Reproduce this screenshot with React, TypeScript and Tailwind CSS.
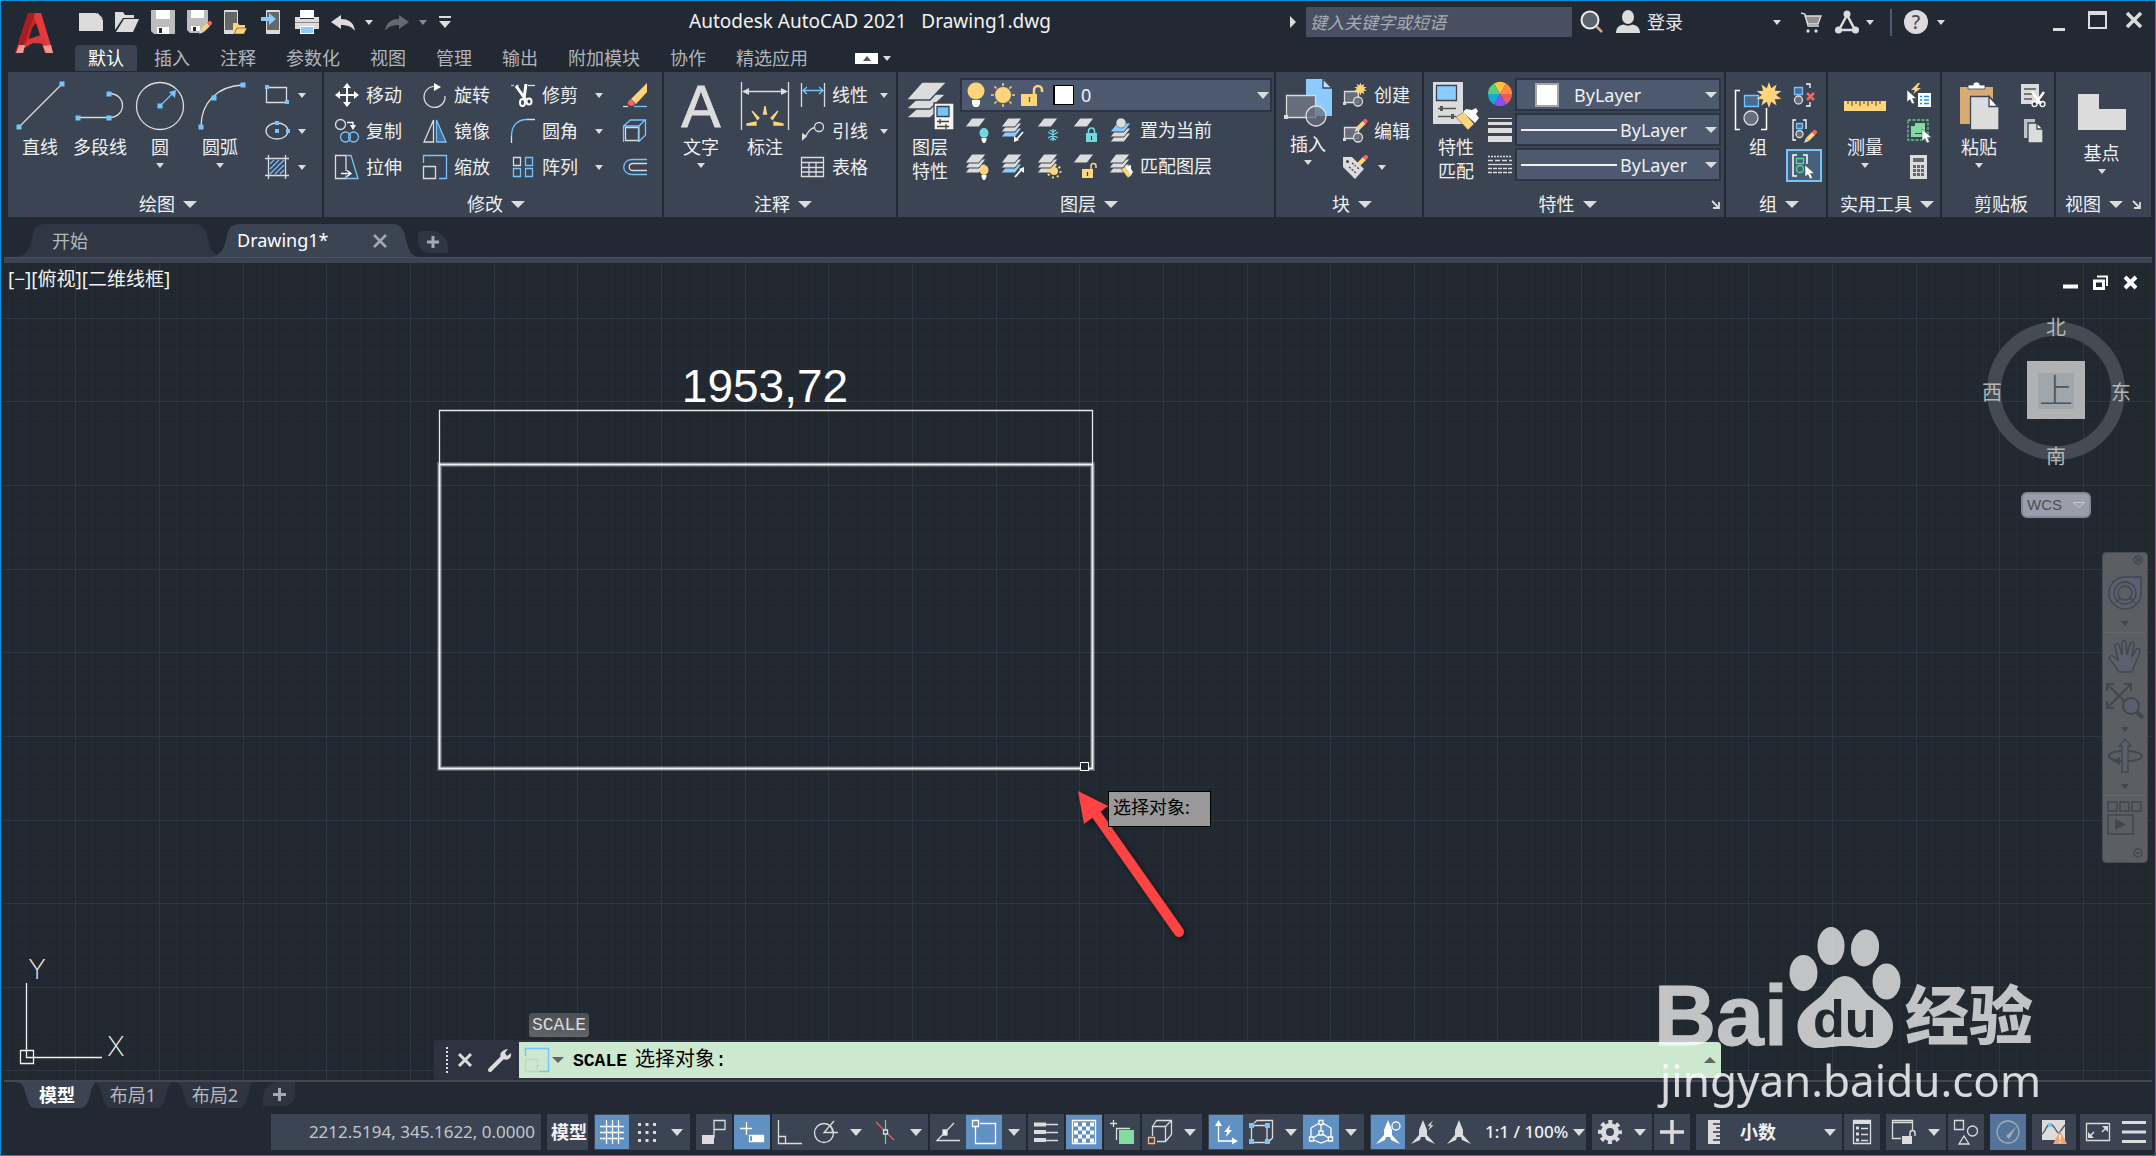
import type { ReactNode } from 'react';

const GREY = '#dcdcdc';
const BLUE = '#74c4ff';
const SKY = '#8accff';
const GOLD = '#ffd47b';
const PANEL = '#3b4453';
const CHROME = '#222933';

interface IconProps {
  w?: number;
  h?: number;
  className?: string;
  children: ReactNode;
}

function Icon({ w = 24, h = 24, className = '', children }: IconProps) {
  return (
    <svg
      width={w}
      height={h}
      viewBox={`0 0 ${w} ${h}`}
      fill="none"
      stroke={GREY}
      strokeWidth={1.3}
      className={`shrink-0 overflow-visible ${className}`}
      aria-hidden="true"
    >
      {children}
    </svg>
  );
}

function Caret({ size = 'sm', up = false, color = GREY }: { size?: 'sm' | 'lg'; up?: boolean; color?: string }) {
  const w = size === 'sm' ? 8 : 14;
  const h = size === 'sm' ? 5 : 7;
  return (
    <svg width={w} height={h} viewBox={`0 0 ${w} ${h}`} className="shrink-0" aria-hidden="true">
      <path d={up ? `M0 ${h}H${w}L${w / 2} 0z` : `M0 0H${w}L${w / 2} ${h}z`} fill={color} />
    </svg>
  );
}

/* small blue grip squares used by the draw tools */
function Grips({ at, s = 5 }: { at: [number, number][]; s?: number }) {
  return (
    <>
      {at.map(([x, y]) => (
        <rect key={`${x}-${y}`} x={x - s / 2} y={y - s / 2} width={s} height={s} fill={BLUE} stroke="none" />
      ))}
    </>
  );
}

function Pencil({ x, y }: { x: number; y: number }) {
  return (
    <g transform={`translate(${x} ${y})`} stroke="none">
      <path d="M0 13l2-5 3 3z" fill={GREY} />
      <path d="M2 8l6-6 3 3-6 6z" fill={GOLD} />
      <path d="M8 2l1.5-1.5a1.5 1.5 0 0 1 2.5 0l.5.5a1.5 1.5 0 0 1 0 2.5L11 5z" fill="#ff5f63" />
    </g>
  );
}

function Cursor({ x, y }: { x: number; y: number }) {
  return <path transform={`translate(${x} ${y})`} d="M0 0v12l3-2.5 2 4.5 2.5-1-2-4.5h4z" fill="#fff" stroke={PANEL} strokeWidth={0.5} />;
}

function Star({ x, y, r }: { x: number; y: number; r: number }) {
  const pts = Array.from({ length: 20 }, (_, i) => {
    const rad = i % 2 ? r * 0.55 : r;
    const a = (i * Math.PI) / 10 - Math.PI / 2;
    return `${(x + rad * Math.cos(a)).toFixed(1)},${(y + rad * Math.sin(a)).toFixed(1)}`;
  });
  return <polygon points={pts.join(' ')} fill={GOLD} stroke="none" />;
}

function Bulb({ x, y, color = GOLD }: { x: number; y: number; color?: string }) {
  return (
    <g stroke="none">
      <ellipse cx={x} cy={y} rx={4.5} ry={5} fill={color} />
      <path d={`M${x - 2.5} ${y + 5}h5v2l-1.5 3h-2l-1.5-3z`} fill="#fff" />
    </g>
  );
}

function Sheets({ n = 3, blue = -1 }: { n?: number; blue?: number }) {
  return (
    <g>
      {Array.from({ length: n }, (_, i) => n - 1 - i).map((i) => (
        <path key={i} d={`M7 ${i * 5}h14l-7 9H0z`} fill={i === blue ? SKY : GREY} stroke={PANEL} strokeWidth={1} />
      ))}
    </g>
  );
}

function LockBody({ x, y, color, open = false }: { x: number; y: number; color: string; open?: boolean }) {
  return (
    <g transform={`translate(${x} ${y})`}>
      <rect x={0} y={5} width={11} height={9} fill={color} stroke="none" />
      <path d={open ? 'M9 5V2a2.5 2.5 0 0 1 5 0v2' : 'M2.5 5V3a3 3 0 0 1 6 0v2'} stroke={color} strokeWidth={1.5} />
      <path d="M5.5 8v4" stroke="#333" strokeWidth={1.2} />
    </g>
  );
}

/* ---------- title bar ---------- */

const quickAccess: { label: string; icon: ReactNode }[] = [
  {
    label: '新建',
    icon: <path d="M0 3h17l7 7v11H0zM18 2.5l6 6h-6z" fill={GREY} stroke="none" />,
  },
  {
    label: '打开',
    icon: (
      <g stroke="none" fill={GREY}>
        <path d="M0 2h8l2 3h9v3H8L0 20z" />
        <path d="M9 9h15l-6 13H1z" />
      </g>
    ),
  },
  {
    label: '保存',
    icon: (
      <g stroke="none">
        <path d="M0 0h24v24H3l-3-3z" fill="#bdbdbd" />
        <path d="M5 0h14v9H5zM6 17h12v7H6z" fill="#fff" />
        <path d="M8 18h3v5H8z" fill={CHROME} />
      </g>
    ),
  },
  {
    label: '另存为',
    icon: (
      <>
        <g stroke="none">
          <path d="M0 0h21v14l-9 9H3l-3-3z" fill="#bdbdbd" />
          <path d="M4 0h13v8H4zM4 16h9v5H4z" fill="#fff" />
          <path d="M6 17h3v4H6z" fill={CHROME} />
        </g>
        <Pencil x={12} y={11} />
      </>
    ),
  },
  {
    label: '从移动设备打开',
    icon: (
      <g stroke="none">
        <rect x={1} y={0} width={14} height={24} rx={1} fill={GREY} />
        <path d="M2 2h12v18H2z" fill="#666" />
        <path d="M10 13h5l1 2h6v3h-8l-3 6h-1z" fill={GOLD} />
        <path d="M14 18h10l-3 6H11z" fill={GOLD} stroke={CHROME} strokeWidth={0.5} />
      </g>
    ),
  },
  {
    label: '保存到移动设备',
    icon: (
      <g stroke="none">
        <rect x={7} y={0} width={14} height={24} rx={1} fill={GREY} />
        <path d="M8 2h12v18H8z" fill="#666" />
        <path d="M2 7h8V3l7 6-7 6v-4H2z" fill={SKY} />
      </g>
    ),
  },
  {
    label: '打印',
    icon: (
      <g stroke="none">
        <path d="M5 0h14v8H5z" fill="#fff" />
        <path d="M0 7h5v2h14V7h5v12H0z" fill={GREY} />
        <path d="M0 12h24v1H0z" fill="#888" />
        <path d="M5 16h14v8H5z" fill="#fff" />
        <path d="M6 17h12v6H6z" fill={SKY} />
      </g>
    ),
  },
];

const undoPath = 'M0 12L10 5v4c7 0 13 3 14 12-3-4-7-6-14-6v4z';

function AppLogo() {
  return (
    <svg width="38" height="42" viewBox="0 0 38 42" aria-hidden="true">
      <path d="M13 1h13l12 40h-8l-3-10-9-2-8 4-2 8H0L13 1z" fill="#c4262b" />
      <path d="M26 1l12 40h-8L18 1z" fill="#e5393c" />
      <path d="M13 1h7L6 41H0z" fill="#a81d22" />
      <path d="M13 27l15-4 4 9-14-1-10 6z" fill="#d8383b" />
      <path d="M17 16l4-5 4 12-11 4z" fill={CHROME} />
      <path d="M4 33l6 0-2 8H1zM28 34l8-1 2 8h-7z" fill="#ee9a92" />
    </svg>
  );
}

const ribbonTabs = ['默认', '插入', '注释', '参数化', '视图', '管理', '输出', '附加模块', '协作', '精选应用'];

function Header() {
  return (
    <header className="flex h-[71px] pl-[14px] pr-[13px]">
      <button aria-label="应用程序菜单" className="w-[58px] shrink-0 pt-[11px] flex items-start">
        <AppLogo />
      </button>
      <div className="flex-1 min-w-0 flex flex-col">
        <div className="flex items-center h-11 pb-0.5">
          <div className="flex w-[616px] shrink-0 items-center">
            {quickAccess.map((q) => (
              <button key={q.label} aria-label={q.label} className="w-9 flex justify-center shrink-0">
                <Icon>{q.icon}</Icon>
              </button>
            ))}
            <button aria-label="放弃" className="w-9 flex justify-center">
              <Icon><path d={undoPath} fill={GREY} stroke="none" /></Icon>
            </button>
            <button aria-label="放弃列表" className="w-4 flex justify-center"><Caret /></button>
            <button aria-label="重做" className="w-9 ml-0.5 flex justify-center">
              <Icon><path d={undoPath} fill="#666a70" stroke="none" transform="matrix(-1 0 0 1 24 0)" /></Icon>
            </button>
            <button aria-label="重做列表" className="w-4 flex justify-center"><Caret color="#888c92" /></button>
            <button aria-label="自定义快速访问工具栏" className="ml-2 flex flex-col items-center gap-[3px]">
              <span className="w-3 h-[2px] bg-[#dcdcdc]" />
              <Icon w={12} h={7}><path d="M0 0h12l-6 7z" fill={GREY} stroke="none" /></Icon>
            </button>
          </div>

          <h1 className="flex-1 text-[19px] leading-6 text-[#f2f2f2] whitespace-pre -mt-0.5">Autodesk AutoCAD 2021   Drawing1.dwg</h1>

          <div className="flex shrink-0 items-center justify-end">
            <Icon w={6} h={12} className="mr-[10px]"><path d="M0 0v12l6-6z" fill={GREY} stroke="none" /></Icon>
            <input
              type="text"
              aria-label="搜索"
              placeholder="键入关键字或短语"
              className="w-[266px] h-[30px] bg-[#474f60] px-1 text-[17px] italic text-white placeholder:text-[#a7acb5] outline-none"
            />
            <button aria-label="搜索" className="ml-2">
              <Icon>
                <circle cx={10} cy={10} r={8.5} fill="#59616b" stroke="#eee" strokeWidth={2} />
                <path d="M16.5 16.5l5.5 5.5" stroke="#d9a877" strokeWidth={2.5} />
              </Icon>
            </button>
            <button className="ml-3 flex items-center gap-[7px] text-[18px] text-[#e8e8e8]">
              <Icon>
                <g stroke="none" fill={GREY}>
                  <ellipse cx={12} cy={7} rx={6} ry={7} />
                  <path d="M0 23c0-6 4-8 8-8.5 2 1.5 6 1.5 8 0 4 .5 8 2.5 8 8.5z" />
                </g>
              </Icon>
              登录
            </button>
            <button aria-label="登录选项" className="ml-[90px]"><Caret /></button>
            <button aria-label="应用商店" className="ml-5">
              <Icon w={20}>
                <path d="M0 3l4 1 3 12h11" />
                <path d="M4 6h16l-3 8H7z" fill="#8f8f8f" />
                <circle cx={7} cy={21} r={1} fill={GREY} />
                <circle cx={15} cy={21} r={1} fill={GREY} />
              </Icon>
            </button>
            <button aria-label="Autodesk App" className="ml-[14px] flex items-center gap-[7px]">
              <Icon>
                <path d="M12 5L4 20h16z" strokeWidth={2.5} />
                <g fill={GREY} stroke="none"><circle cx={12} cy={4} r={3.5} /><circle cx={3.5} cy={20} r={3.5} /><circle cx={20.5} cy={20} r={3.5} /></g>
              </Icon>
              <Caret />
            </button>
            <span className="w-[2px] h-[27px] bg-[#4e5a70] ml-4" />
            <button aria-label="帮助" className="ml-3 flex items-center gap-[9px]">
              <span className="size-6 rounded-full bg-[#dcdcdc] text-[#4a4f57] text-[19px] leading-6 font-medium">?</span>
              <Caret />
            </button>
            <button aria-label="最小化" className="ml-[108px] h-[18px] w-3 flex items-end"><span className="h-[3px] w-3 bg-[#dcdcdc]" /></button>
            <button aria-label="最大化" className="ml-[23px] mb-1 w-[19px] h-[18px] border-2 border-t-[4px] border-[#dcdcdc]" />
            <button aria-label="关闭" className="ml-[19px] mb-1">
              <Icon w={16} h={16}><path d="M1 1l14 14M15 1L1 15" strokeWidth={3.5} /></Icon>
            </button>
          </div>
        </div>

        <nav className="flex items-center h-[26px]">
          {ribbonTabs.map((t, i) => (
            <button
              key={t}
              className={`mx-0.5 px-[13px] h-[26px] text-[18px] leading-6 shrink-0 rounded-t-sm ${
                i === 0 ? 'bg-[#3b4453] text-white' : 'text-[#b0b5bc]'
              }`}
            >
              {t}
            </button>
          ))}
          <button aria-label="最小化功能区" className="ml-8 w-[23px] h-[11px] bg-white flex items-center justify-center">
            <Caret up color="#555" />
          </button>
          <button aria-label="功能区选项" className="ml-[5px]"><Caret /></button>
        </nav>
      </div>
    </header>
  );
}

/* ---------- ribbon building blocks ---------- */

function Panel({ title, width, children, caret = true, launcher = false }: {
  title: string;
  width: string;
  children: ReactNode;
  caret?: boolean;
  launcher?: boolean;
}) {
  return (
    <section className={`${width} shrink-0 h-[145px] bg-[#3b4453] flex flex-col`}>
      <div className="flex-1 flex">{children}</div>
      <footer className={`h-[26px] flex items-center ${launcher ? 'pr-1' : 'pl-1.5'}`}>
        <span className="flex-1" />
        <button className="flex items-center gap-2 text-[18px] leading-6 text-[#eef0f2] whitespace-nowrap">
          {title}
          {caret && <Caret size="lg" />}
        </button>
        <span className="flex-1" />
        {launcher && (
          <button aria-label={`${title}设置`}>
            <Icon w={9} h={9}><path d="M1 1l6 6M8 2v6H2" strokeWidth={1.8} /></Icon>
          </button>
        )}
      </footer>
    </section>
  );
}

function BigTool({ label, icon, caret = false, width = 'w-[60px]', top = 'pt-[10px]' }: {
  label: string[];
  icon: ReactNode;
  caret?: boolean;
  width?: string;
  top?: string;
}) {
  return (
    <button className={`${width} ${top} shrink-0 flex flex-col items-center justify-start`}>
      <Icon w={48} h={48}>{icon}</Icon>
      <span className="mt-[5px] text-[18px] leading-6 text-[#eef0f2] whitespace-nowrap">
        {label.map((l) => <span key={l} className="block">{l}</span>)}
      </span>
      {caret && <span className="mt-1"><Caret /></span>}
    </button>
  );
}

interface Tool {
  name: string;
  text?: boolean;
  caret?: boolean;
  icon: ReactNode;
}

function SmallTool({ tool, caretGap = 'ml-[17px]' }: { tool: Tool; caretGap?: string }) {
  return (
    <button aria-label={tool.name} className="h-9 flex items-center text-[18px] text-[#eef0f2] whitespace-nowrap">
      <Icon>{tool.icon}</Icon>
      {tool.text && <span className="ml-[7px]">{tool.name}</span>}
      {tool.caret && <span className={caretGap}><Caret /></span>}
    </button>
  );
}

function ToolColumn({ tools, className, caretGap }: { tools: Tool[]; className: string; caretGap?: string }) {
  return (
    <div className={`flex flex-col shrink-0 pt-[5px] ${className}`}>
      {tools.map((t) => <SmallTool key={t.name} tool={t} caretGap={caretGap} />)}
    </div>
  );
}

const drawShapes: Tool[] = [
  { name: '矩形', caret: true, icon: <><path d="M1.5 4.5h20v15h-20z" /><Grips at={[[2, 4], [22, 19]]} s={4} /></> },
  { name: '椭圆', caret: true, icon: <><ellipse cx={12} cy={12} rx={11} ry={8} /><Grips at={[[12, 4], [12, 12], [23, 12]]} s={4} /></> },
  {
    name: '图案填充',
    caret: true,
    icon: (
      <>
        <path d="M0 3.5h24M0 20.5h24M3.5 0v24M20.5 0v24" />
        <path d="M5 9l4-4M5 14l9-9M5 19L19 5M10 19l9-9M15 19l4-4" stroke={BLUE} />
      </>
    ),
  },
];

const modifyTools: Tool[][] = [
  [
    {
      name: '移动', text: true,
      icon: <path d="M12 0l4 5h-3v6h6V8l5 4-5 4v-3h-6v6h3l-4 5-4-5h3v-6H5v3l-5-4 5-4v3h6V5H8z" fill="#fff" stroke="none" />,
    },
    {
      name: '复制', text: true,
      icon: (
        <>
          <circle cx={5.5} cy={5.5} r={5} />
          <path d="M12 3.5h6v5" stroke="#fff" />
          <path d="M15 6h6l-3 5z" fill="#fff" stroke="none" />
          <circle cx={10.5} cy={18} r={5} stroke={BLUE} />
          <circle cx={18.5} cy={18} r={5} stroke={BLUE} />
        </>
      ),
    },
    {
      name: '拉伸', text: true,
      icon: (
        <>
          <path d="M11 16V.5H.5v23H11v-3" />
          <path d="M11 .5h5l7 23H11" stroke={BLUE} />
          <path d="M6 18.5h9M12 15.5l4 3-4 3" stroke="#fff" />
        </>
      ),
    },
  ],
  [
    { name: '旋转', text: true, icon: <><path d="M15 4A10.500 10.500 0 1 0 22 13" /><path d="M11 0l7 4-7 4z" fill="#fff" stroke="none" /></> },
    { name: '镜像', text: true, icon: <><path d="M10.5 1v22H1z" /><path d="M13.5 1v22H23z" stroke={BLUE} fill="#4b6c8e" /></> },
    { name: '缩放', text: true, icon: <><path d="M.5 11.5h12v12H.5z" /><path d="M.5 8V.5h23v23H16" stroke={BLUE} /></> },
  ],
  [
    {
      name: '修剪', text: true, caret: true,
      icon: (
        <>
          <path d="M0 2.5h9" stroke={BLUE} strokeDasharray="3 2" />
          <path d="M17 2.5h7" />
          <path d="M5 3l10 14M15 1l-2 15" stroke="#fff" strokeWidth={3} />
          <ellipse cx={11.5} cy={19.5} rx={2.5} ry={3.5} stroke="#fff" strokeWidth={2} />
          <ellipse cx={18} cy={18.5} rx={2.5} ry={3} stroke="#fff" strokeWidth={2} />
        </>
      ),
    },
    { name: '圆角', text: true, caret: true, icon: <><path d="M.5 24v-7M16 .5h8" /><path d="M.5 17C.5 6 7 .5 16 .5" stroke={BLUE} /></> },
    {
      name: '阵列', text: true, caret: true,
      icon: <><path d="M2.5 2.5h7v8h-7z" /><path d="M14.5 2.5h7v8h-7zM2.5 13.5h7v8h-7zM14.5 13.5h7v8h-7z" stroke={BLUE} /></>,
    },
  ],
  [
    {
      name: '删除',
      icon: (
        <>
          <path d="M0 23.5h5" /><path d="M11 23.5h13" stroke={BLUE} />
          <path d="M24 0v9L13 21l-5-5z" fill={GOLD} stroke="none" />
          <path d="M8 16l4 5c-2 3-6 2-7 0s1-4 3-5z" fill="#ff5f63" stroke="none" />
        </>
      ),
    },
    { name: '分解', icon: <><path d="M2.5 8.500h13v13h-13z" /><path d="M.5 23V7l7-6h15v15l-7 7M16 7l6-6M16 7v16M.5 7H16" stroke={BLUE} /></> },
    { name: '偏移', icon: <><path d="M24 4.5H9c-11 0-11 15 0 15h15" stroke={BLUE} /><path d="M24 8.5H10c-5 0-5 7 0 7h14" /></> },
  ],
];

const annotateTools: Tool[] = [
  { name: '线性', text: true, caret: true, icon: <><path d="M.5 0v24M23.5 0v24" /><path d="M2 7.5h20M6 4L2 7.5 6 11M18 4l4 3.5L18 11" stroke={BLUE} /></> },
  { name: '引线', text: true, caret: true, icon: <><circle cx={18} cy={8} r={4.5} /><path d="M13 9c-5 0-6 6-10 10" /><path d="M1 22v-8l5 3z" fill={GREY} stroke="none" /></> },
  { name: '表格', text: true, icon: <path d="M.5 2.5h22v19H.5zM.5 7.5h22M.5 12.5h22M.5 17h22M8 7.5v14M15 7.5v14" /> },
];

const layerTools: Tool[][] = [
  [
    { name: '关', icon: <><Sheets n={1} /><Bulb x={19} y={15} color="#6fd8e0" /></> },
    { name: '隔离', icon: <><Sheets blue={2} /><path d="M22 14l-7 8" stroke="#fff" strokeWidth={1.8} /><path d="M13 24v-6l5 4z" fill="#fff" stroke="none" /></> },
    {
      name: '冻结',
      icon: <><Sheets n={1} /><path d="M16 11v12M11 14l10 6M21 14l-10 6M13 12l3 2 3-2M13 22l3-2 3 2" stroke="#6fd8e0" /></>,
    },
    { name: '锁定', icon: <><Sheets n={1} /><LockBody x={13} y={10} color="#6fd8e0" /></> },
    {
      name: '置为当前', text: true,
      icon: <><g transform="translate(1 5)"><Sheets blue={0} /></g><circle cx={12} cy={5} r={5} fill={GREY} stroke={PANEL} strokeWidth={0.5} /></>,
    },
  ],
  [
    { name: '打开所有图层', icon: <><Sheets /><Bulb x={19} y={16} /></> },
    { name: '取消隔离', icon: <><Sheets blue={2} /><path d="M14 23l7-8" stroke="#fff" strokeWidth={1.8} /><path d="M23 13v6l-5-4z" fill="#fff" stroke="none" /></> },
    {
      name: '解冻所有图层',
      icon: <><Sheets /><circle cx={17} cy={17} r={4} fill={GOLD} stroke="none" /><circle cx={17} cy={17} r={6.5} stroke={GOLD} strokeWidth={2} strokeDasharray="2 3" /></>,
    },
    { name: '解锁', icon: <><Sheets n={1} /><LockBody x={9} y={10} color={GOLD} open /></> },
    {
      name: '匹配图层', text: true,
      icon: <><Sheets /><path d="M12 15l4-2 7 8-4 3z" fill={GOLD} stroke={PANEL} strokeWidth={0.5} /><path d="M16 13l3-1 3-1v4l2 3-2 3z" fill="#fff" stroke="none" /></>,
    },
  ],
];

const blockShape = (
  <>
    <path d="M1.5 8.5h14v11h-14z" fill="#666e7b" />
    <path d="M0 19h3v3H0z" fill={GREY} stroke="none" />
    <circle cx={15} cy={18.5} r={4.5} fill="#666e7b" fillOpacity={0.8} />
  </>
);

const blockTools: Tool[] = [
  { name: '创建', text: true, icon: <>{blockShape}<Star x={17.5} y={6} r={6.5} /></> },
  { name: '编辑', text: true, icon: <>{blockShape}<Pencil x={11.5} y={0} /></> },
  {
    name: '编辑属性', caret: true,
    icon: (
      <>
        <path d="M0 2h9l12 12-9 10L0 12z" fill={GREY} stroke="none" />
        <circle cx={4.5} cy={6.5} r={1.5} fill={PANEL} stroke="none" />
        <path d="M6 12l7 6M9 8l7 6" stroke={PANEL} strokeDasharray="2 1.5" />
        <Pencil x={12} y={0} />
      </>
    ),
  },
];

const groupBrackets = <path d="M5 1H1v21h4M11 1h4v9" stroke="#fff" strokeWidth={1.5} />;

const utilityTools: Tool[] = [
  {
    name: '快速选择',
    icon: (
      <>
        <path d="M11 0L4 7h4l-2 4 8-6h-4l3-5z" fill={GOLD} stroke="none" />
        <Cursor x={0} y={7} />
        <path d="M11 10h13v14H11z" fill="#fff" stroke="none" />
        <path d="M13 13.5h2M13 17h2M13 20.5h2M17 13.5h5M17 17h5M17 20.5h5" stroke="#1c8ee0" strokeWidth={1.5} />
      </>
    ),
  },
  {
    name: '全部选择',
    icon: (
      <>
        <path d="M1 1h20v20H1z" stroke="#63cf85" strokeDasharray="3 1.5" />
        <path d="M4 7h4v8h7v3H4zM8 4h10v10H8z" fill="#84dba0" stroke="none" />
        <Cursor x={15} y={10} />
      </>
    ),
  },
  {
    name: '快速计算器',
    icon: (
      <>
        <path d="M3 0h17v24H3z" fill={GREY} stroke="none" />
        <path d="M6 3h11v4H6z" fill="#666" stroke="none" />
        <path d="M6 11.5h11M6 15.5h11M6 19.5h11" stroke="#666" strokeWidth={3} strokeDasharray="3 1" />
      </>
    ),
  },
];

const clipboardTools: Tool[] = [
  {
    name: '剪切',
    icon: (
      <>
        <path d="M0 1h18v20H0z" fill={GREY} stroke="none" />
        <path d="M3 6h12M3 11h9M3 16h8" stroke="#555" />
        <path d="M11 9l9 12M23 9l-8 11" stroke="#fff" strokeWidth={2.5} />
        <circle cx={13.5} cy={21} r={2.5} stroke="#fff" fill={PANEL} /><circle cx={21.5} cy={21} r={2.5} stroke="#fff" />
      </>
    ),
  },
  {
    name: '复制剪裁',
    icon: (
      <>
        <path d="M3 0h11v19H3z" fill="#bfc2c6" stroke="none" />
        <path d="M7 4h9l6 6v14H7z" fill={GREY} stroke={PANEL} />
        <path d="M16 4v6h6z" fill="#fff" stroke={PANEL} />
      </>
    ),
  },
];

function ByLayerSelect({ label, line = false }: { label: string; line?: boolean }) {
  return (
    <div className="h-[33px] border-[2px] border-[#2c3442] bg-[#4d596e] flex items-center pr-[2px]">
      {line ? (
        <span className="ml-[4px] w-24 h-[2px] bg-[#f0f0f0]" />
      ) : (
        <span className="ml-[18px] size-6 bg-white border-2 border-[#a5a5a5]" />
      )}
      <select
        aria-label={label}
        className={`flex-1 appearance-none bg-transparent text-[18px] leading-6 text-[#eef0f2] outline-none ${line ? 'pl-[3px]' : 'pl-[15px]'}`}
      >
        <option>ByLayer</option>
      </select>
      <Icon w={12} h={6}><path d="M0 0h12l-6 6z" fill={GREY} stroke="none" /></Icon>
    </div>
  );
}

function Ribbon() {
  return (
    <div className="flex gap-0.5 pl-[7px] pr-1 overflow-hidden">
      <Panel title="绘图" width="w-[314px]">
        <div className="flex pl-0.5">
          <BigTool label={['直线']} icon={<><path d="M3 45L45 3" /><Grips at={[[3, 45], [46, 2]]} /></>} />
          <BigTool label={['多段线']} icon={<><path d="M2 35.5h31c18 0 18-24 0-24" /><Grips at={[[2, 36], [33, 36], [33, 12]]} /></>} />
          <BigTool
            label={['圆']}
            caret
            icon={
              <>
                <circle cx={24} cy={24} r={23.5} />
                <path d="M24 24L36 12" stroke={BLUE} />
                <path d="M40 8l-1 8-6-6z" fill={BLUE} stroke="none" />
                <Grips at={[[24, 24]]} />
              </>
            }
          />
          <BigTool label={['圆弧']} caret icon={<><path d="M5 45C5 20 22 4 47 3" /><Grips at={[[5, 45], [18, 16], [47, 3]]} /></>} />
        </div>
        <ToolColumn tools={drawShapes} className="ml-[15px]" caretGap="ml-[9px]" />
      </Panel>

      <Panel title="修改" width="w-[338px]">
        <ToolColumn tools={modifyTools[0]} className="ml-[11px] w-[88px]" />
        <ToolColumn tools={modifyTools[1]} className="w-[88px]" />
        <ToolColumn tools={modifyTools[2]} className="w-[112px]" />
        <ToolColumn tools={modifyTools[3]} className="" />
      </Panel>

      <Panel title="注释" width="w-[232px]">
        <div className="flex pl-[5px]">
          <BigTool
            label={['文字']}
            caret
            width="w-16"
            icon={
              <text x={24} y={45} textAnchor="middle" fontFamily="Liberation Sans" fontSize={59} fill={GREY} stroke={GREY} strokeWidth={0.8}>A</text>
            }
          />
          <BigTool
            label={['标注']}
            width="w-16"
            icon={
              <>
                <path d="M.5 0v48M47.5 0v48M3 9.5h42" />
                <path d="M1 9.5l7-3.5v7zM47 9.5L40 6v7z" fill={GREY} stroke="none" />
                <path d="M24 24l1.5 8h-3zM11 29l7 7-1.500 1.500zM37 29l-7 7 1.500 1.500zM6 42l9-2v3H6zM42 42l-9-2v3h9z" fill={GOLD} stroke={GOLD} />
              </>
            }
          />
        </div>
        <ToolColumn tools={annotateTools} className="ml-1" caretGap="ml-3" />
      </Panel>

      <Panel title="图层" width="w-[376px]">
        <BigTool
          label={['图层', '特性']}
          width="w-16"
          icon={
            <>
              <g stroke={PANEL}>
                <path d="M16 22h24L24 36H0z" fill={GREY} />
                <path d="M16 12h24L24 27H0z" fill={GREY} />
                <path d="M16 0h25L24 18H0z" fill={GREY} />
              </g>
              <path d="M28 21h20v27H28z" fill="#f4f4f4" stroke={PANEL} />
              <path d="M31 24.5h12v10H31z" fill={BLUE} stroke="#33414f" />
              <path d="M31 39.5h12M31 44.5h12M34 37v5M40 42v5" stroke="#444" />
            </>
          }
        />
        <div className="pt-1.5 flex-1 pr-0.5 flex flex-col">
          <div className="-ml-0.5 h-[34px] border-[2px] border-[#2c3442] bg-[#4d596e] flex items-center pl-[5px] pr-px">
            <Icon w={18} h={26}>
              <circle cx={9} cy={9} r={8.5} fill={GOLD} stroke="none" />
              <path d="M5 18h8v4l-2 3H7l-2-3z" fill="#fff" stroke="none" />
            </Icon>
            <Icon className="ml-1.5">
              <circle cx={12} cy={12} r={8} fill={GOLD} stroke="none" />
              <path
                d="M12 0v3M12 21v3M0 12h3M21 12h3M3.5 3.5l2 2M18.5 18.5l2 2M20.5 3.5l-2 2M5.5 18.5l-2 2"
                stroke={GOLD}
                strokeWidth={1.5}
              />
            </Icon>
            <Icon className="ml-1.5">
              <path d="M0 11h16v12H0z" fill={GOLD} stroke="none" />
              <path d="M13 11V7a4 4 0 0 1 8 0v2" stroke={GOLD} strokeWidth={2.5} />
              <path d="M8.5 14v5" stroke="#555" />
            </Icon>
            <span className="ml-2 w-[21px] h-5 bg-white border border-l-2 border-black" />
            <select aria-label="当前图层" className="flex-1 appearance-none bg-transparent text-[18px] leading-6 text-[#eef0f2] outline-none pl-[7px]">
              <option>0</option>
            </select>
            <Icon w={12} h={7}><path d="M0 0h12l-6 7z" fill={GREY} stroke="none" /></Icon>
          </div>
          {layerTools.map((row, i) => (
            <div key={i} className="flex gap-3 pl-[3px]">
              {row.map((t) => <SmallTool key={t.name} tool={t} />)}
            </div>
          ))}
        </div>
      </Panel>

      <Panel title="块" width="w-[146px]">
        <BigTool
          label={['插入']}
          caret
          width="w-16"
          top="pt-[7px]"
          icon={
            <>
              <path d="M22 0h18l8 9v28H22z" fill={SKY} stroke="none" />
              <path d="M39 0v9h9z" fill="#c3e4ff" stroke={PANEL} />
              <path d="M2.5 16.5h29v22h-29z" fill="#666e7b" />
              <path d="M0 36h4v4H0z" fill={GREY} stroke="none" />
              <circle cx={32} cy={37} r={10} fill="#666e7b" fillOpacity={0.75} />
            </>
          }
        />
        <ToolColumn tools={blockTools} className="ml-[3px]" caretGap="ml-[11px]" />
      </Panel>

      <Panel title="特性" width="w-[300px]" launcher>
        <BigTool
          label={['特性', '匹配']}
          width="w-16"
          icon={
            <>
              <path d="M1 0h30v42H1z" fill={GREY} stroke="none" />
              <path d="M4.5 3.5h20v15h-20z" fill={SKY} stroke={PANEL} />
              <path d="M6 26.5h18M6 34.5h18" stroke="#555" />
              <path d="M8 24h3v5H8zM19 32h3v5h-3z" fill="#555" stroke="none" />
              <path d="M24 35l8-5 10 12-6 6z" fill={GOLD} stroke={PANEL} strokeWidth={0.5} />
              <path d="M31 30l3-3 6 1 4-2 2 3-2 3 3 4-4 5z" fill="#fff" stroke="none" />
            </>
          }
        />
        <div className="flex flex-col pt-[10px] gap-3">
          <Icon>
            <g stroke="none">
              <path d="M12 12L6 1.6A12 12 0 0 1 18 1.6z" fill="#ffc33f" />
              <path d="M12 12L18 1.6A12 12 0 0 1 24 12z" fill="#ff8b3f" />
              <path d="M12 12H24A12 12 0 0 1 18 22.4z" fill="#ee5a5e" />
              <path d="M12 12L18 22.4A12 12 0 0 1 6 22.4z" fill="#8a4dff" />
              <path d="M12 12L6 22.4A12 12 0 0 1 0 12z" fill="#16acd0" />
              <path d="M12 12H0A12 12 0 0 1 6 1.6z" fill="#56cb82" />
            </g>
          </Icon>
          <Icon><path d="M0 0h24v1H0zM0 4h24v3H0zM0 10h24v5H0zM0 18h24v6H0z" fill={GREY} stroke="none" /></Icon>
          <Icon>
            <path d="M0 2.5h24" strokeDasharray="2 1" />
            <path d="M0 6.500h24" strokeDasharray="5 2" />
            <path d="M0 14.500h24M0 18.500h24" strokeDasharray="4 1" />
            <path d="M0 10.500h24" />
          </Icon>
        </div>
        <div className="ml-[3px] flex-1 pr-[3px] pt-1.5 flex flex-col gap-0.5">
          <ByLayerSelect label="对象颜色" />
          <ByLayerSelect label="线宽" line />
          <ByLayerSelect label="线型" line />
        </div>
      </Panel>

      <Panel title="组" width="w-[100px]">
        <BigTool
          label={['组']}
          width="w-16"
          icon={
            <>
              <path d="M6 8.5H1.5v39H6M27 47.5h5.5V26" stroke="#fff" strokeWidth={1.5} />
              <path d="M10.5 13.5h14v11h-14z" fill="#4b6c8e" stroke={BLUE} />
              <circle cx={17} cy={36} r={7} fill="#666e7b" />
              <Star x={35} y={13} r={13} />
            </>
          }
        />
        <div className="pt-[5px] -ml-1 flex flex-col items-center">
          <button aria-label="解除编组" className="h-9 flex items-center">
            <Icon>
              <path d="M2.5 4.5h8v7h-8z" fill="#4b6c8e" stroke={BLUE} />
              <circle cx={6.5} cy={17} r={4} fill="#666e7b" />
              <path d="M14 1h4v4M18 19v4h-4" stroke="#fff" />
              <path d="M15 10l7 7M22 10l-7 7" stroke="#ff5f63" strokeWidth={2.5} />
            </Icon>
          </button>
          <button aria-label="组编辑" className="h-9 flex items-center">
            <Icon>
              <path d="M4 1H1v20h3M11 1h3v9" stroke="#fff" />
              <path d="M4.5 4.5h6v5h-6z" fill="#4b6c8e" stroke={BLUE} />
              <circle cx={7.5} cy={15} r={3.5} fill="#666e7b" />
              <Pencil x={12} y={11} />
            </Icon>
          </button>
          <button aria-label="启用组选择" className="w-9 h-[33px] flex items-center justify-center border-2 border-[#74c4ff] bg-[#46607d]">
            <Icon>
              {groupBrackets}
              <path d="M4.5 4.5h7v5h-7z" stroke="#5fd787" />
              <circle cx={8} cy={15} r={3.5} stroke="#5fd787" />
              <Cursor x={13} y={11} />
            </Icon>
          </button>
        </div>
      </Panel>

      <Panel title="实用工具" width="w-[112px]">
        <BigTool
          label={['测量']}
          caret
          width="w-[74px]"
          icon={
            <>
              <path d="M3 19h42v10H3z" fill={GOLD} stroke="none" />
              <path d="M7 19v3M11 19v5M15 19v3M19 19v5M23 19v3M27 19v5M31 19v3M35 19v5M39 19v3" stroke="#7a6534" />
            </>
          }
        />
        <ToolColumn tools={utilityTools} className="ml-[5px]" />
      </Panel>

      <Panel title="剪贴板" width="w-[112px]" caret={false}>
        <BigTool
          label={['粘贴']}
          caret
          width="w-[74px]"
          icon={
            <>
              <path d="M5 5h33v37H5z" fill="#d8ab74" stroke="none" />
              <path d="M13 3h5c0-4 7-4 7 0h5v4H13z" fill="#fff" stroke={PANEL} strokeWidth={0.8} />
              <path d="M15.5 14.5H34l10 10V48H15.5z" fill={GREY} stroke={PANEL} />
              <path d="M34 14.5v10h9z" fill="#fff" stroke={PANEL} />
            </>
          }
        />
        <ToolColumn tools={clipboardTools} className="ml-[5px]" />
      </Panel>

      <Panel title="视图" width="w-[95px] pr-1.5" launcher>
        <BigTool
          label={['基点']}
          caret
          width="w-[91px]"
          top="pt-4"
          icon={<path d="M0 6h21v15h27v21H0z" fill={GREY} stroke="none" />}
        />
      </Panel>
    </div>
  );
}

/* ---------- file tabs ---------- */

function TabShape({ fill }: { fill: string }) {
  return (
    <svg className="absolute inset-0 size-full" viewBox="0 0 210 33" preserveAspectRatio="none" aria-hidden="true">
      <path d="M0 33c12 0 16-8 18-18S22 0 32 0h150c10 0 12 6 14 15s5 18 14 18z" fill={fill} />
    </svg>
  );
}

function FileTabs() {
  return (
    <div className="px-[3px]">
      <div className="flex items-end h-10 pl-2.5">
        <button className="relative w-[208px] h-[33px] pl-[38px] text-left text-[18px] leading-6 text-[#b4b8bf]">
          <TabShape fill="#303744" />
          <span className="relative">开始</span>
        </button>
        <div className="relative -ml-[14px] w-[212px] h-[33px] flex items-center pl-[29px]">
          <TabShape fill="#3b4453" />
          <button className="relative w-[135px] text-left text-[18px] text-white">Drawing1*</button>
          <button aria-label="关闭 Drawing1" className="relative">
            <Icon w={16} h={16}><path d="M2 2l12 12M14 2L2 14" strokeWidth={2.5} stroke="#a5a9af" /></Icon>
          </button>
        </div>
        <button aria-label="新图形" className="-ml-0.5 mb-1 w-[30px] h-[22px] flex items-center justify-center rounded-tr-2xl rounded-bl-xl rounded-tl-sm bg-[#303744]">
          <Icon w={14} h={14}><path d="M7 1v12M1 7h12" strokeWidth={3} stroke="#a5a9af" /></Icon>
        </button>
      </div>
      <div className="h-1.5 bg-[#3b4453] border-t border-[#464f5e]" />
    </div>
  );
}

/* ---------- model space ---------- */

const GRID = 83.65;

function GridLines() {
  const lines: ReactNode[] = [];
  // minor lines first so that the major ones lie on top
  for (const major of [false, true]) {
    for (let i = -4; i < 230; i++) {
      if ((i % 5 === 0) !== major) continue;
      const x = Math.round(71.4 + (i * GRID) / 5) + 0.5;
      const y = Math.round(54.6 + (i * GRID) / 5) + 0.5;
      const stroke = major ? '#2f3645' : '#252c36';
      lines.push(<path key={`${major}${i}`} d={`M${x} 0V2400M0 ${y}H4000`} stroke={stroke} />);
    }
  }
  return <g fill="none">{lines}</g>;
}

function Drawing() {
  return (
    <svg className="absolute inset-0 size-full" role="img" aria-label="图形">
      <defs>
        <filter id="drop" x="-20%" y="-20%" width="150%" height="150%">
          <feDropShadow dx="3" dy="3" stdDeviation="3" floodOpacity="0.5" />
        </filter>
      </defs>
      <GridLines />
      <g fill="none">
        <path d="M435.5 201V147.5H1088.5V201" stroke="#e8e8e8" strokeWidth={1.3} />
        <rect x={435.5} y={201.5} width={653} height={304} stroke="#fff" strokeOpacity={0.25} strokeWidth={5} />
        <rect x={435.5} y={201.5} width={653} height={304} stroke="#f0f2f4" strokeWidth={2} />
        <rect x={1076.5} y={499.5} width={8} height={8} stroke="#fff" fill="#212830" />
      </g>
      <text x={761} y={139} textAnchor="middle" fontFamily="Liberation Sans, sans-serif" fontSize={46} fill="#fff">1953,72</text>
      <g filter="url(#drop)">
        <path d="M1092 551L1175 669" stroke="#ff4343" strokeWidth={10} strokeLinecap="round" />
        <path d="M1074 528l6 33 24-18z" fill="#ff4343" />
      </g>
    </svg>
  );
}

function ViewCube() {
  const font = { fontFamily: 'Liberation Serif, Noto Sans CJK SC, serif', fontSize: 20, fill: '#b5b6b8' };
  return (
    <svg width="160" height="160" viewBox="0 0 160 160" className="absolute right-[16px] top-[50px]" aria-label="ViewCube">
      <circle cx={80} cy={78} r={62} fill="none" stroke="#454b53" strokeWidth={14} />
      <rect x={51} y={48} width={58} height={58} fill="#b0b2b4" />
      <rect x={62} y={60} width={36} height={36} fill="#9fa6ac" />
      <g textAnchor="middle" {...font}>
        <text x={80} y={22}>北</text>
        <text x={80} y={151}>南</text>
        <text x={16} y={87}>西</text>
        <text x={145} y={87}>东</text>
        <text x={80} y={90} fontSize={34} fontWeight={300} fill="#4c545c">上</text>
      </g>
    </svg>
  );
}

function NavBar() {
  const ink = '#42464d';
  const fill = '#5a606d';
  return (
    <div className="absolute right-1 top-[289px] w-[46px] h-[311px] rounded bg-[#5b5f64] border border-[#474c52] flex flex-col items-center">
      <button aria-label="关闭导航栏" className="self-end mr-1 mt-0.5">
        <Icon w={10} h={10}><circle cx={5} cy={5} r={4} stroke={ink} /><path d="M3 3l4 4M7 3L3 7" stroke={ink} /></Icon>
      </button>
      <button aria-label="全导航控制盘" className="mt-2.5">
        <Icon w={36} h={36}>
          <path d="M18 2h16v16A16 16 0 1 1 18 2z" fill={fill} stroke={ink} strokeWidth={1.5} />
          <circle cx={18} cy={18} r={11} stroke={ink} /><circle cx={18} cy={18} r={7} fill="#5b5f64" stroke={ink} />
          <path d="M8 28l5-5M28 28l-5-5" stroke={ink} />
        </Icon>
      </button>
      <span className="mt-2.5"><Caret color={ink} /></span>
      <span className="mt-1.5 h-px w-10 bg-[#666a6f]" />
      <button aria-label="平移" className="mt-1.5">
        <Icon w={36} h={36}>
          <path
            d="M12 33C9 27 6 24 2 19c0-3 3-3 5-1l4 3-3-14c0-3 3-3 4-1l3 10 0-12c0-3 4-3 4 0l1 12 3-11c1-3 4-2 4 0l-2 13 4-7c1-3 4-2 4 1-2 5-2 9-5 13l-3 8z"
            fill={fill} stroke={ink} strokeWidth={1.5}
          />
        </Icon>
      </button>
      <button aria-label="范围缩放" className="mt-2">
        <Icon w={38} h={38}>
          <path d="M2 2l22 22M24 2L2 24M1 8V1h7M18 1h7v7M1 18v7h7" stroke={ink} strokeWidth={2} />
          <circle cx={25} cy={23} r={8} fill={fill} stroke={ink} strokeWidth={2} />
          <path d="M31 29l6 6" stroke={ink} strokeWidth={4} />
        </Icon>
      </button>
      <span className="mt-1.5"><Caret color={ink} /></span>
      <button aria-label="动态观察" className="mt-1.5">
        <Icon w={36} h={36}>
          <path d="M11 23C-4 20 0 13 18 13s24 8 6 10H10" stroke={ink} strokeWidth={2} />
          <path d="M13 19v8l-8-4z" fill={ink} stroke="none" />
          <path d="M18 1l6 7h-3v26h-6V8h-3z" fill={fill} stroke={ink} />
        </Icon>
      </button>
      <span className="mt-2.5"><Caret color={ink} /></span>
      <span className="mt-1.5 h-px w-10 bg-[#666a6f]" />
      <button aria-label="ShowMotion" className="mt-1">
        <Icon w={36} h={36}>
          <path d="M1 2h9v9H1zM13 2h9v9h-9zM25 2h9v9h-9zM1 15h25v19H1z" stroke={ink} strokeWidth={1.5} />
          <path d="M8 19v11l11-5.5z" fill={ink} stroke="none" />
        </Icon>
      </button>
      <button aria-label="导航栏选项" className="self-end mr-1 mt-auto mb-1">
        <Icon w={10} h={10}><circle cx={5} cy={5} r={4} stroke={ink} /><path d="M3 5h4" stroke={ink} /></Icon>
      </button>
    </div>
  );
}

function UcsIcon() {
  return (
    <svg width="130" height="130" viewBox="0 0 130 130" className="absolute left-0 bottom-0" aria-label="UCS">
      <path d="M22.5 33V107.5H98M16.5 100.5h13v13h-13z" fill="none" stroke="#f0f0f0" strokeWidth={1.3} />
      <g textAnchor="middle" fontFamily="Inter, Lato, sans-serif" fontWeight={200} fontSize={27} fill="#f0f0f0">
        <text x={33} y={29}>Y</text>
        <text x={112} y={106}>X</text>
      </g>
    </svg>
  );
}

function CommandLine() {
  return (
    <div className="absolute left-[430px] right-[431px] bottom-0 flex flex-col items-start">
      <span className="ml-[95px] mb-[3px] px-[3px] h-6 rounded-[3px] bg-gradient-to-b from-[#4c4f52] to-[#626467] font-['Liberation_Mono',monospace] text-[18px] leading-6 text-[#dcdcdc]">
        SCALE
      </span>
      <div className="w-full h-10 rounded-l bg-[#2d3341] flex items-center">
        <span className="ml-3 h-[26px] border-l-2 border-dotted border-[#dcdcdc]" />
        <button aria-label="关闭命令行" className="ml-2.5">
          <Icon w={14} h={14}><path d="M1 1l12 12M13 1L1 13" strokeWidth={3} /></Icon>
        </button>
        <button aria-label="自定义" className="ml-4">
          <Icon>
            <path d="M2 22L15 9" strokeWidth={4} strokeLinecap="round" />
            <path d="M20 1l-3 4 2 3 4-3c1 5-3 8-8 6s-3-9 5-10z" fill={GREY} stroke="none" />
          </Icon>
        </button>
        <div className="ml-[7px] flex-1 h-9 rounded-r-sm bg-[#cce8cf] flex items-center pl-1.5 pr-[5px]">
          <button aria-label="最近使用的命令" className="flex items-center gap-[3px]">
            <Icon>
              <path d="M.5 11.5h12v12H.5z" stroke="#c9cfc9" />
              <path d="M.5 8V.5h23v23H14" stroke={BLUE} strokeWidth={1.5} />
            </Icon>
            <Icon w={12} h={6}><path d="M0 0h12l-6 6z" fill="#666" stroke="none" /></Icon>
          </button>
          <label htmlFor="cmd" className="ml-[9px] pt-0.5 flex items-center gap-2 whitespace-nowrap text-black">
            <span className="font-['Liberation_Mono',monospace] font-bold text-[18px]">SCALE</span>
            <span className="font-['Liberation_Mono','Noto_Sans_CJK_SC',monospace] text-[20px]">选择对象:</span>
          </label>
          <input id="cmd" type="text" className="flex-1 min-w-0 ml-1 bg-transparent outline-none text-black text-[18px]" />
          <button aria-label="命令历史"><Icon w={12} h={6}><path d="M0 6h12L6 0z" fill="#666" stroke="none" /></Icon></button>
        </div>
      </div>
    </div>
  );
}

function ModelSpace() {
  return (
    <main className="relative flex-1 min-h-[640px] mx-[3px] bg-[#212830] overflow-hidden">
      <Drawing />
      <div className="relative flex justify-between items-start pl-1 pr-[14px] pt-1">
        <span className="text-[19px] leading-6 text-[#f2f2f2]">[−][俯视][二维线框]</span>
        <span className="flex items-end gap-[15px] mt-2">
          <button aria-label="最小化视口"><Icon w={15} h={15}><path d="M0 11.5h15" stroke="#fff" strokeWidth={4} /></Icon></button>
          <button aria-label="还原视口"><Icon w={15} h={15}><path d="M1.5 6h9v7.5h-9z" stroke="#fff" strokeWidth={3} /><path d="M4 1.5h10V11" stroke="#fff" strokeWidth={2} /></Icon></button>
          <button aria-label="关闭视口"><Icon w={15} h={15}><path d="M2 2l11 11M13 2L2 13" stroke="#fff" strokeWidth={4} /></Icon></button>
        </span>
      </div>
      <ViewCube />
      <button className="absolute right-[61px] top-[229px] w-[70px] h-[26px] rounded-md bg-[#9c9dab] border-2 border-[#868895] flex items-center justify-between px-1 font-['Liberation_Sans',sans-serif] text-[15px] text-[#4c4e56]">
        WCS
        <Icon w={12} h={6}><path d="M.5 .5h11L6 5.5z" stroke="#c8c9d4" strokeWidth={1} /></Icon>
      </button>
      <NavBar />
      <UcsIcon />
      <div className="absolute left-[1104px] top-[528px] w-[103px] h-9 border border-black bg-[#999] pl-1 text-[18px] leading-[30px] text-black whitespace-nowrap">
        选择对象:
      </div>
      <CommandLine />
    </main>
  );
}

function LayoutTabs() {
  const shape = (fill: string) => (
    <svg className="absolute inset-0 size-full" viewBox="0 0 84 26" preserveAspectRatio="none" aria-hidden="true">
      <path d="M0 0c8 0 9 6 11 13s4 13 9 13h46c5 0 7-6 9-13s3-13 9-13z" fill={fill} />
    </svg>
  );
  return (
    <div className="mx-[3px] h-[34px] border-t-2 border-[#43474f] flex items-start pl-[11px] text-[18px] leading-6">
      <button className="relative w-[84px] h-[26px] font-bold text-white">{shape('#3b4453')}<span className="relative">模型</span></button>
      <button className="relative -ml-2 w-[84px] h-[26px] text-[#b4b8bf]">{shape('#2e3541')}<span className="relative">布局1</span></button>
      <button className="relative -ml-0.5 w-[84px] h-[26px] text-[#b4b8bf]">{shape('#2e3541')}<span className="relative">布局2</span></button>
      <button aria-label="新建布局" className="ml-1.5 w-[32px] h-6 flex items-center justify-center rounded-tl-2xl rounded-br-xl bg-[#2e3541]">
        <Icon w={13} h={13}><path d="M6.5 0v13M0 6.5h13" strokeWidth={3} stroke="#a5a9af" /></Icon>
      </button>
    </div>
  );
}

/* ---------- status bar ---------- */

function Seg({ children, width = 'w-9', className = 'bg-[#3b4453]' }: { children: ReactNode; width?: string; className?: string }) {
  return <div className={`${width} h-9 shrink-0 flex items-center ${className}`}>{children}</div>;
}

function Toggle({ label, on = false, width = 'w-9', children }: { label: string; on?: boolean; width?: string; children: ReactNode }) {
  return (
    <button aria-label={label} aria-pressed={on} className={`${width} h-[34px] shrink-0 flex items-center justify-center ${on ? 'bg-[#6190c2]' : ''}`}>
      <Icon>{children}</Icon>
    </button>
  );
}

function DropCaret({ label }: { label: string }) {
  return (
    <button aria-label={label} className="w-6 h-9 flex items-center justify-center">
      <Icon w={12} h={7}><path d="M0 0h12l-6 7z" fill={GREY} stroke="none" /></Icon>
    </button>
  );
}

const annoShape = 'M12 0l4 10v5l8 9-9-4-1-3h-4l-1 3-9 4 8-9v-5z';

function StatusBar() {
  return (
    <div className="flex justify-end gap-1.5 h-9 mb-[5px] pr-[3px] text-[18px] text-[#eef0f2]">
      <Seg width="w-[270px]" className="bg-[#3b4453] justify-end pr-1.5 text-[17px] text-[#c3c6cc]"><span>2212.5194, 345.1622, 0.0000</span></Seg>
      <Seg width="w-[41px]" className="bg-[#3b4453] justify-end pr-px"><button className="font-bold whitespace-nowrap">模型</button></Seg>
      <Seg width="w-24" className="bg-[#3b4453] pl-px">
        <Toggle label="栅格" on width="w-[34px]"><path d="M0 6.5h24M0 12.5h24M0 18.5h24M6.5 0v24M12.5 0v24M18.5 0v24" stroke="#fff" /></Toggle>
        <Toggle label="捕捉模式"><path d="M3 4.5h18M3 12.5h18M3 20.5h18" strokeWidth={3} strokeDasharray="3 4.5" /></Toggle>
        <DropCaret label="捕捉设置" />
      </Seg>

      <div className="flex gap-0.5">
        <Seg><Toggle label="推断约束"><path d="M0 15h12v9H0z" fill={GREY} stroke="none" /><path d="M12 18V.5h11v9H12" /></Toggle></Seg>
        <Seg><Toggle label="动态输入" on><path d="M6.5 2v13M0 8.5h12" stroke="#fff" /><path d="M9.5 15.5h14v6h-14z" stroke="#fff" /><path d="M12 15h12v7H12z" fill="#fff" stroke="none" /></Toggle></Seg>
        <Seg width="w-[156px]">
          <Toggle label="正交模式"><path d="M.5 0v23.5H24M.5 16.5h7v7" /></Toggle>
          <Toggle label="极轴追踪"><circle cx={10} cy={13} r={9.5} /><path d="M24 12.5H10L20 1M16 6c2 2 3 4 2 7" /></Toggle>
          <DropCaret label="极轴设置" />
          <Toggle label="等轴测草图"><path d="M2 2l18 18" stroke="#e0636b" /><path d="M11.5 0v24" stroke="#5fd787" /><path d="M9.500 10h4v4h-4z" fill={PANEL} /></Toggle>
          <DropCaret label="等轴测设置" />
        </Seg>
        <Seg width="w-24">
          <Toggle label="对象捕捉追踪"><path d="M18 3L1 20.5h23" /><path d="M7 10h4v5H7z" fill="#fff" /></Toggle>
          <Toggle label="对象捕捉" on><path d="M3.5 7v16.5h20v-20H8" stroke="#fff" /><path d="M.5 .5h6v6h-6z" stroke="#fff" /></Toggle>
          <DropCaret label="对象捕捉设置" />
        </Seg>
        <Seg><Toggle label="线宽"><path d="M0 4.5h12M0 12h12M0 20h12" strokeWidth={4} /><path d="M12 4.5h12M12 12.5h12M12 20.5h12" /></Toggle></Seg>
        <Seg>
          <Toggle label="透明度" on>
            <path d="M.5 .5h23v23H.5z" stroke="#fff" />
            <path d="M2 4.5h20M2 12.5h20M2 20.5h20M6 8.5h16M6 16.5h16" stroke="#fff" strokeWidth={4} strokeDasharray="4 4" />
          </Toggle>
        </Seg>
        <Seg><Toggle label="选择循环"><path d="M3.5 0v7M0 3.5h7" /><path d="M6.5 20V8.5H20" /><path d="M9 10h15v14H9z" fill="#84dba0" stroke="none" /></Toggle></Seg>
        <Seg width="w-[60px]">
          <Toggle label="三维对象捕捉"><path d="M4.5 16V6.5h13v15H9M4.5 6.5l4-6h15v14l-6 7M17.5 6.5l6-6" /><path d="M.5 17.5h6v6h-6z" stroke="#ffb27a" /></Toggle>
          <DropCaret label="三维对象捕捉设置" />
        </Seg>
      </div>

      <Seg width="w-[156px]" className="bg-[#3b4453] pl-px">
        <Toggle label="动态 UCS" on width="w-[34px]"><path d="M4.5 4v17H20" stroke="#fff" /><path d="M4.5 0l3.5 6H1zM24 21l-6-3.5v7z" fill="#fff" stroke="none" /><path d="M16 5l-6 7h3l-1 5 6-7h-3z" fill="#fff" stroke="none" /></Toggle>
        <Toggle label="选择过滤"><path d="M5 5.5h13v15M2.5 8v12M5 22.5h13M5 3l3-2.5h15.5V18l-3 3" /><Grips at={[[2.5, 5.5], [18.5, 5.5], [2.5, 21.5], [18.5, 21.5]]} /></Toggle>
        <DropCaret label="过滤设置" />
        <Toggle label="小控件" on>
          <path d="M12 3v10M12 2L2 8v11l10 4 10-4V8zM12 13l-9 6M12 13l9 6" stroke="#fff" />
          <path d="M10 .5h4v4h-4zM10 11h4v4h-4zM.5 17h4v4h-4zM19.5 17h4v4h-4z" fill="#6190c2" stroke="#fff" />
        </Toggle>
        <DropCaret label="小控件设置" />
      </Seg>

      <Seg width="w-[216px]" className="bg-[#3b4453] pl-px">
        <Toggle label="注释可见性" on width="w-[34px]"><path d={annoShape} fill="#fff" stroke="none" /><circle cx={20} cy={6} r={4} fill="#6190c2" stroke="#fff" /></Toggle>
        <Toggle label="自动缩放"><path d={annoShape} fill={GREY} stroke="none" /><path d="M22 0l-6 6h3l-2 5 6-6h-3z" fill={GREY} stroke={PANEL} strokeWidth={0.5} /></Toggle>
        <Toggle label="注释比例"><path d={annoShape} fill={GREY} stroke="none" /></Toggle>
        <button className="ml-2 text-[17px] font-medium whitespace-nowrap flex items-center gap-[5px]">
          1:1 / 100%
          <Icon w={12} h={7}><path d="M0 0h12l-6 7z" fill={GREY} stroke="none" /></Icon>
        </button>
      </Seg>

      <div className="flex gap-0.5">
        <Seg width="w-[60px]">
          <Toggle label="切换工作空间">
            <circle cx={12} cy={12} r={6.5} strokeWidth={5} />
            <circle cx={12} cy={12} r={10} strokeWidth={4} strokeDasharray="4 3.854" strokeDashoffset={2} />
          </Toggle>
          <DropCaret label="工作空间列表" />
        </Seg>
        <Seg><Toggle label="注释监视器"><path d="M12 0v24M0 12h24" strokeWidth={3.5} /></Toggle></Seg>
      </div>

      <div className="flex gap-0.5">
        <Seg width="w-[146px]">
          <Icon w={12} className="ml-3"><path d="M0 0h12v24H0z" fill={GREY} stroke="none" /><path d="M5 4h7M8 8h4M5 12h7M8 16h4M5 20h7" stroke="#333" /></Icon>
          <select aria-label="单位" className="ml-5 flex-1 appearance-none bg-transparent font-bold text-[18px] outline-none">
            <option>小数</option>
          </select>
          <Icon w={12} h={7} className="mr-1.5"><path d="M0 0h12l-6 7z" fill={GREY} stroke="none" /></Icon>
        </Seg>
        <Seg>
          <Toggle label="快捷特性">
            <path d="M3.5 .5h17v23h-17z" /><path d="M3 0h18v4H3z" fill={GREY} stroke="none" />
            <path d="M6 8h3M6 14h3M6 20h3" strokeWidth={3} /><path d="M11 8.5h7M11 14.5h7M11 20.5h7" />
          </Toggle>
        </Seg>
      </div>

      <div className="flex gap-0.5">
        <Seg width="w-[60px]">
          <Toggle label="锁定用户界面"><path d="M9 18.5H.5v-18h20V10M.5 2.5h20" /><path d="M10 16h10v8H10z" fill={GREY} stroke="none" /><path d="M18 16v-3a2.5 2.5 0 0 1 5 0v3" strokeWidth={1.5} /></Toggle>
          <DropCaret label="锁定设置" />
        </Seg>
        <Seg><Toggle label="隔离对象"><path d="M.5 .5h9v9h-9zM10 16l5 8H5z" /><circle cx={18.5} cy={11} r={5} /></Toggle></Seg>
      </div>

      <Seg className="bg-[#53739b] justify-center">
        <button aria-label="硬件加速"><Icon><circle cx={12} cy={12} r={11} stroke="#a4abb4" /><path d="M10 16l10-9-7 12z" fill="#a4abb4" stroke="none" /></Icon></button>
      </Seg>

      <div className="flex gap-1">
        <Seg width="w-11" className="bg-[#3b4453] justify-center">
          <Toggle label="性能提示">
            <path d="M0 0h23v20H0z" fill={GREY} stroke="none" />
            <path d="M0 14c3-1 4-9 8-10 5 1 6 9 9 9l6-8" stroke="#555" />
            <path d="M6 3h4v4H6z" fill={BLUE} stroke="none" />
            <path d="M18 11l7 13H11z" fill="#f2a46f" stroke="none" /><path d="M18 15v5M18 21.5v1.5" stroke="#fff" />
          </Toggle>
        </Seg>
        <Seg width="w-[72px]">
          <Toggle label="全屏显示"><path d="M.5 3.5h23v17H.5z" /><path d="M2 18v-6l6 6zM22 6v6l-6-6z" fill={GREY} stroke="none" /><path d="M3 17l5-5M21 7l-5 5" strokeWidth={1.5} /></Toggle>
          <Toggle label="自定义"><path d="M0 2.5h24M0 12h24M0 21.5h24" strokeWidth={3} /></Toggle>
        </Seg>
      </div>
    </div>
  );
}

function Watermark() {
  return (
    <svg width="400" height="195" viewBox="0 0 400 195" className="absolute right-[103px] bottom-[40px] pointer-events-none" aria-hidden="true">
      <g fill="#fff" opacity={0.72}>
        <ellipse cx={151.5} cy={53} rx={14} ry={18} />
        <ellipse cx={179} cy={26} rx={13.5} ry={19} />
        <ellipse cx={213} cy={28} rx={14} ry={18.5} transform="rotate(8 213 28)" />
        <ellipse cx={234.5} cy={61.5} rx={14} ry={18} />
        <path d="M193 56C203 56 208 66 214 73C222 82 241 90 241 106C241 120 232 128 220 128C210 128 204 126 193 126C182 126 178 128 166 128C154 128 145.5 120 145.5 106C145.5 90 164 82 172 73C178 66 183 56 193 56Z" />
        <text x={2} y={125} fontFamily="Liberation Sans, sans-serif" fontWeight={700} fontSize={86} stroke="#fff" strokeWidth={1}>Bai</text>
        <text x={253} y={119} fontFamily="Noto Sans CJK SC, sans-serif" fontWeight={900} fontSize={64}>经验</text>
      </g>
      <text x={161} y={117} fontFamily="Liberation Sans, sans-serif" fontWeight={700} fontSize={52} fill="#212830">du</text>
      <text x={8} y={177} fontFamily="Noto Sans, sans-serif" fontSize={44} fill="#fff" opacity={0.82}>jingyan.baidu.com</text>
    </svg>
  );
}

export default function App() {
  return (
    <div className="relative min-h-screen flex flex-col overflow-hidden border border-[#0c8fd6] bg-[#222933] font-['Noto_Sans','Noto_Sans_CJK_SC',sans-serif]">
      <Header />
      <Ribbon />
      <FileTabs />
      <ModelSpace />
      <LayoutTabs />
      <StatusBar />
      <Watermark />
    </div>
  );
}
